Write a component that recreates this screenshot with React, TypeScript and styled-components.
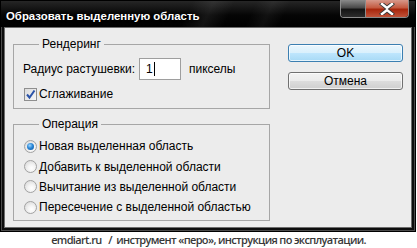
import React from "react";
import styled, { createGlobalStyle } from "styled-components";

const Global = createGlobalStyle`
  html, body { margin: 0; padding: 0; background: #fff; }
  body { font-family: "Liberation Sans", Arial, sans-serif; }
`;

const Page = styled.div`
  width: 417px;
  height: 248px;
  display: flex;
  flex-direction: column;
`;

const Window = styled.div`
  width: 416px;
  height: 235px;
  box-sizing: border-box;
  border: 1px solid #000;
  background: #0d0d0d;
  padding: 0 3px 3px;
  display: flex;
  flex-direction: column;
  box-shadow: inset 0 0 0 1px #4a4a4a;
`;

const TitleBar = styled.div`
  height: 26px;
  display: flex;
  justify-content: space-between;
  align-items: flex-start;
  background:
    linear-gradient(115deg, transparent 45%, rgba(255,255,255,0.07) 50%, transparent 55%),
    linear-gradient(115deg, transparent 60%, rgba(255,255,255,0.05) 64%, transparent 68%),
    linear-gradient(180deg, #262626 0%, #050505 55%, #000 100%);
  margin: 0 -3px;
  padding: 0 5px 0 5px;
`;

const Title = styled.div`
  color: #fff;
  font-family: "Liberation Sans", Arial, sans-serif;
  font-weight: bold;
  font-size: 11.4px;
  line-height: 14px;
  margin-top: 8px;
  text-shadow: 0 0 3px rgba(0,0,0,0.9);
`;

const Controls = styled.div`
  display: flex;
  margin-top: -1px;
  margin-right: 1px;
  border: 1px solid #8c8c8c;
  border-top: none;
  border-radius: 0 0 4px 4px;
  overflow: hidden;
  height: 17px;
`;

const CtrlButton = styled.div<{ $red?: boolean }>`
  width: ${(p) => (p.$red ? 42 : 24)}px;
  height: 17px;
  display: flex;
  align-items: center;
  justify-content: center;
  background: ${(p) =>
    p.$red
      ? "linear-gradient(180deg, #d7988a 0%, #c45a41 45%, #a8260c 55%, #c0533a 100%)"
      : "linear-gradient(180deg, #8a8a8a 0%, #4a4a4a 45%, #141414 55%, #2c2c2c 100%)"};
  border-right: ${(p) => (p.$red ? "none" : "1px solid #8c8c8c")};
`;

const Content = styled.div`
  flex: 1;
  background: #ececec;
  border: 1px solid #6c6c6c;
  display: flex;
  justify-content: space-between;
  padding: 0 8px 0 8px;
`;

const LeftCol = styled.div`
  width: 257px;
  display: flex;
  flex-direction: column;
  gap: 8px;
  padding-top: 9px;
`;

const Group = styled.fieldset<{ $h: number }>`
  margin: 0;
  padding: 0 0 0 9px;
  border: 1px solid #a6a6a6;
  height: ${(p) => p.$h}px;
  box-sizing: border-box;
  font-family: "Liberation Sans", Arial, sans-serif;
  font-size: 12px;
  color: #000;
`;

const Legend = styled.legend`
  margin-left: 16px;
  padding: 0 3px;
  line-height: 14px;
  font-size: 12px;
`;

const Row = styled.div<{ $top?: number }>`
  display: flex;
  align-items: center;
  margin-top: ${(p) => p.$top ?? 0}px;
`;

const Label = styled.span`
  width: 116px;
`;

const InputBox = styled.div`
  border: 1px solid #9e9e9e;
  background: #fff;
  display: flex;
  align-items: center;
  padding-left: 6px;
  box-sizing: border-box;
  width: 42px;
  height: 22px;
`;

const Caret = styled.span`
  display: inline-block;
  width: 1px;
  height: 14px;
  background: #000;
  margin-left: 1px;
`;

const Units = styled.span`
  margin-left: 8px;
`;

const CheckBox = styled.span`
  width: 13px;
  height: 13px;
  box-sizing: border-box;
  border: 1px solid #8f8f8f;
  background: linear-gradient(135deg, #dcdcdc 0%, #f6f6f6 100%);
  display: flex;
  align-items: center;
  justify-content: center;
  margin-left: 1px;
  margin-right: 2px;
`;

const Radio = styled.span<{ $on?: boolean }>`
  width: 13px;
  height: 13px;
  box-sizing: border-box;
  border-radius: 50%;
  border: 1px solid #a2a2a2;
  background: radial-gradient(circle at 60% 65%, #ffffff 0%, #f4f4f4 35%, #d2d2d2 100%);
  display: flex;
  align-items: center;
  justify-content: center;
  margin-left: 1px;
  margin-right: 2px;
  &::after {
    content: "";
    display: ${(p) => (p.$on ? "block" : "none")};
    width: 7px;
    height: 7px;
    border-radius: 50%;
    background: radial-gradient(circle at 40% 35%, #9fd6ff 0%, #2a87d6 45%, #0b4f9a 100%);
  }
`;

const RadioRow = styled.div`
  display: flex;
  align-items: center;
  height: 20.4px;
`;

const RadioList = styled.div`
  display: flex;
  flex-direction: column;
  margin-top: 5px;
`;

const RightCol = styled.div`
  width: 115px;
  display: flex;
  flex-direction: column;
  gap: 10px;
  padding-top: 16px;
`;

const Button = styled.div<{ $primary?: boolean }>`
  height: 18px;
  box-sizing: border-box;
  border: 1px solid ${(p) => (p.$primary ? "#3c7fb1" : "#707070")};
  border-radius: 3px;
  background: ${(p) =>
    p.$primary
      ? "linear-gradient(180deg, #eaf6fd 0%, #d9f0fc 50%, #bee6fd 51%, #a7d9f5 100%)"
      : "linear-gradient(180deg, #f2f2f2 0%, #ebebeb 50%, #dddddd 51%, #cfcfcf 100%)"};
  box-shadow: inset 0 0 0 1px rgba(255,255,255,0.7);
  display: flex;
  align-items: center;
  justify-content: center;
  font-family: "Liberation Sans", Arial, sans-serif;
  font-size: 12px;
  color: #000;
`;

const Caption = styled.div`
  flex: 1;
  display: flex;
  align-items: center;
  justify-content: center;
  white-space: pre;
  font-family: "Open Sans", "Noto Sans", sans-serif;
  font-size: 11px;
  letter-spacing: -0.65px;
  font-weight: 600;
  color: #383838;
  padding-bottom: 1px;
`;

const CloseIcon = () => (
  <svg width="16" height="12" viewBox="0 0 16 12">
    <path d="M3 1 L8 5 L13 1 M3 11 L8 7 L13 11" stroke="#3a3a3a" strokeWidth="4.2" fill="none" strokeLinecap="square" />
    <path d="M3 1 L8 5 L13 1 M3 11 L8 7 L13 11" stroke="#fff" strokeWidth="2.4" fill="none" strokeLinecap="square" />
  </svg>
);

const CheckIcon = () => (
  <svg width="11" height="11" viewBox="0 0 11 11">
    <path d="M2 5.5 L4.5 8.5 L9.5 1.5" stroke="#2b53a8" strokeWidth="2" fill="none" />
  </svg>
);

const options = [
  "Новая выделенная область",
  "Добавить к выделенной области",
  "Вычитание из выделенной области",
  "Пересечение с выделенной областью",
];

export default function App() {
  return (
    <Page>
      <Global />
      <Window>
        <TitleBar>
          <Title>Образовать выделенную область</Title>
          <Controls>
            <CtrlButton />
            <CtrlButton $red>
              <CloseIcon />
            </CtrlButton>
          </Controls>
        </TitleBar>
        <Content>
          <LeftCol>
            <Group $h={72}>
              <Legend>Рендеринг</Legend>
              <Row $top={7}>
                <Label>Радиус растушевки:</Label>
                <InputBox>
                  1<Caret />
                </InputBox>
                <Units>пикселы</Units>
              </Row>
              <Row $top={7}>
                <CheckBox>
                  <CheckIcon />
                </CheckBox>
                Сглаживание
              </Row>
            </Group>
            <Group $h={104}>
              <Legend>Операция</Legend>
              <RadioList>
                {options.map((o, i) => (
                  <RadioRow key={o}>
                    <Radio $on={i === 0} />
                    {o}
                  </RadioRow>
                ))}
              </RadioList>
            </Group>
          </LeftCol>
          <RightCol>
            <Button $primary>OK</Button>
            <Button>Отмена</Button>
          </RightCol>
        </Content>
      </Window>
      <Caption>{"emdiart.ru   /  инструмент «перо», инструкция по эксплуатации."}</Caption>
    </Page>
  );
}
